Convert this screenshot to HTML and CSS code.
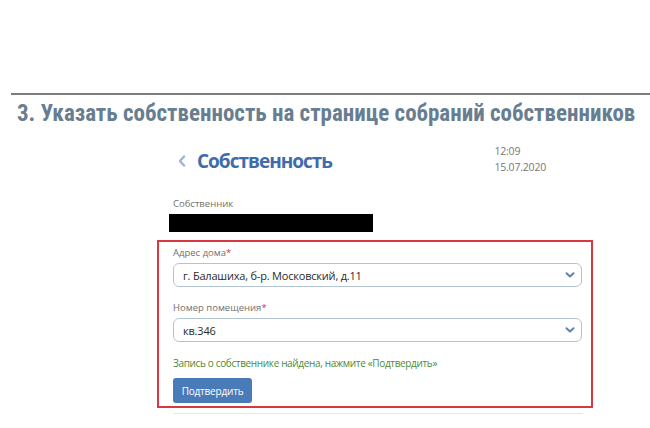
FILE: index.html
```html
<!DOCTYPE html>
<html lang="ru">
<head>
    <meta charset="UTF-8">
    <title>Собственность</title>
    <link rel="stylesheet" href="styles.css">
</head>
<body>
    <div class="slide-head">
        <div class="rule"></div>
        <h1 class="slide-title">3. Указать собственность на странице собраний собственников</h1>
    </div>

    <div class="screen">
        <div class="screen-head">
            <div class="page-title">
                <svg class="back" width="8" height="12" viewBox="0 0 8 12"><path d="M6 1.5 L2 6 L6 10.5" fill="none" stroke="#9fb4d4" stroke-width="2.4" stroke-linecap="round" stroke-linejoin="round"/></svg>
                <span>Собственность</span>
            </div>
            <div class="stamp">12:09<br>15.07.2020</div>
        </div>

        <div class="owner">
            <div class="label">Собственник</div>
            <div class="hidden-name"></div>
        </div>

        <div class="owner-form">
            <div class="label">Адрес дома<span class="req">*</span></div>
            <div class="select">
                <span>г. Балашиха, б-р. Московский, д.11</span>
                <svg width="10" height="6" viewBox="0 0 10 6"><path d="M1.5 1.2 L5 4.5 L8.5 1.2" fill="none" stroke="#5f82b3" stroke-width="2" stroke-linecap="round" stroke-linejoin="round"/></svg>
            </div>
            <div class="label">Номер помещения<span class="req">*</span></div>
            <div class="select">
                <span>кв.346</span>
                <svg width="10" height="6" viewBox="0 0 10 6"><path d="M1.5 1.2 L5 4.5 L8.5 1.2" fill="none" stroke="#5f82b3" stroke-width="2" stroke-linecap="round" stroke-linejoin="round"/></svg>
            </div>
            <div class="found">Запись о собственнике найдена, нажмите «Подтвердить»</div>
            <button class="confirm">Подтвердить</button>
        </div>
        <div class="bottom-line"></div>
    </div>
</body>
</html>
```

FILE: styles.css
```css
body, html {
    margin: 0;
    background: #fff;
    font-family: "Open Sans", "Noto Sans", sans-serif;
}
.slide-head {
    padding-top: 93px;
}
.rule {
    height: 2px;
    margin-left: 11px;
    background: #7d7d7d;
}
.slide-title {
    margin: 5px 0 0 17px;
    font-family: "Liberation Sans Narrow", "Roboto Condensed", "Liberation Sans", sans-serif;
    font-size: 23px;
    line-height: 27px;
    font-weight: bold;
    color: #687e90;
    white-space: nowrap;
}
.screen {
    width: 436px;
    margin: 14px 0 0 157px;
}
.screen-head {
    display: flex;
    justify-content: space-between;
    padding: 0 47px 0 21px;
}
.page-title {
    display: flex;
    align-items: center;
    gap: 11px;
    padding-top: 6px;
    font-size: 19px;
    font-weight: bold;
    color: #3f6cab;
    letter-spacing: -1px;
}
.stamp {
    margin-top: 2px;
    font-size: 10.5px;
    line-height: 16px;
    color: #777;
    letter-spacing: -0.2px;
}
.owner {
    padding: 22px 0 0 16px;
}
.label {
    font-size: 9.5px;
    line-height: 14px;
    color: #707070;
}
.req {
    color: #d0373d;
}
.hidden-name {
    width: 204px;
    height: 18px;
    margin: 3px 0 0 -4px;
    background: #000;
}
.owner-form {
    margin-top: 8px;
    padding: 4px 9px 3px 14px;
    border: 2px solid #d6393f;
}
.select {
    display: flex;
    justify-content: space-between;
    align-items: center;
    height: 22px;
    margin: 3px 0 14px;
    padding: 0 6px 0 9px;
    border: 1px solid #b3c3d8;
    border-radius: 6px;
    font-size: 11px;
    letter-spacing: -0.2px;
    color: #2a2a2a;
}
.select + .label {
    margin-top: 1px;
}
.found {
    font-size: 10px;
    letter-spacing: -0.35px;
    color: #4e8a37;
}
.confirm {
    margin-top: 8px;
    width: 79px;
    height: 25px;
    border: none;
    border-radius: 3px;
    background: #4a7bb9;
    color: #fff;
    font-family: inherit;
    font-size: 10px;
    letter-spacing: -0.2px;
}
.bottom-line {
    height: 1px;
    margin: 5px 10px 0 16px;
    background: #e6e6e6;
}
```
